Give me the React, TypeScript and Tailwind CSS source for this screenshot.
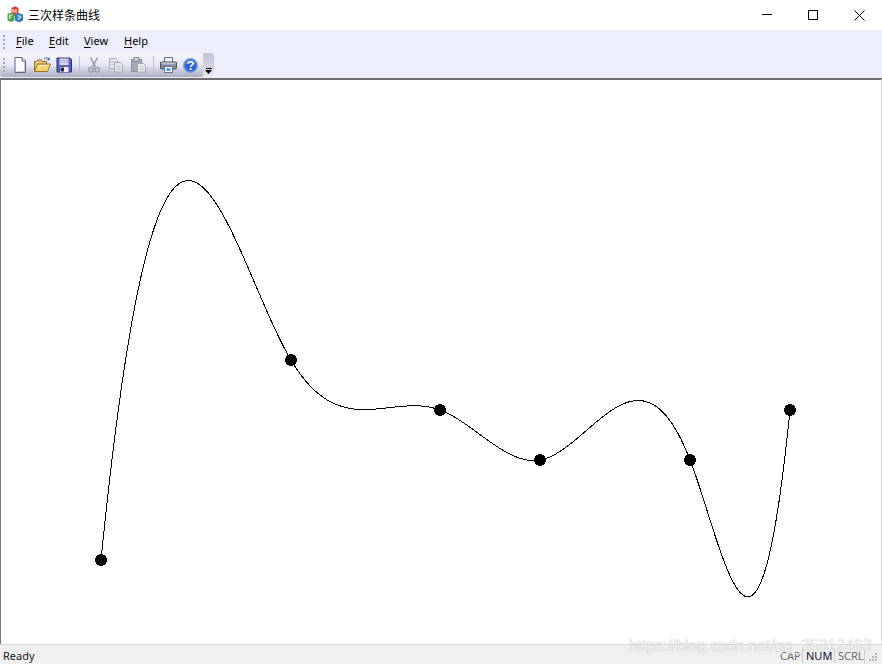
import React from "react";

const dots: [number, number][] = [[101, 560], [291, 360], [440, 410], [540, 460], [690, 460], [790, 410]];

function clampedSpline(p: [number, number][], m0: number, mn: number) {
  const n = p.length;
  const h = p.slice(0, -1).map((q, i) => p[i + 1][0] - q[0]);
  const a: number[] = new Array(n).fill(0);
  const b: number[] = new Array(n).fill(1);
  const c: number[] = new Array(n).fill(0);
  const r: number[] = new Array(n).fill(0);
  b[0] = 2 * h[0];
  c[0] = h[0];
  r[0] = 6 * ((p[1][1] - p[0][1]) / h[0] - m0);
  a[n - 1] = h[n - 2];
  b[n - 1] = 2 * h[n - 2];
  r[n - 1] = 6 * (mn - (p[n - 1][1] - p[n - 2][1]) / h[n - 2]);
  for (let i = 1; i < n - 1; i++) {
    a[i] = h[i - 1];
    b[i] = 2 * (h[i - 1] + h[i]);
    c[i] = h[i];
    r[i] = 6 * ((p[i + 1][1] - p[i][1]) / h[i] - (p[i][1] - p[i - 1][1]) / h[i - 1]);
  }
  for (let i = 1; i < n; i++) {
    const m = a[i] / b[i - 1];
    b[i] -= m * c[i - 1];
    r[i] -= m * r[i - 1];
  }
  const s: number[] = new Array(n).fill(0);
  s[n - 1] = r[n - 1] / b[n - 1];
  for (let i = n - 2; i >= 0; i--) s[i] = (r[i] - c[i] * s[i + 1]) / b[i];
  let d = "";
  for (let i = 0; i < n - 1; i++) {
    const step = 0.25;
    for (let x = p[i][0]; x <= p[i + 1][0]; x += step) {
      const A = (p[i + 1][0] - x) / h[i];
      const B = (x - p[i][0]) / h[i];
      const y = A * p[i][1] + B * p[i + 1][1] + (((A * A * A - A) * s[i] + (B * B * B - B) * s[i + 1]) * h[i] * h[i]) / 6;
      d += `${d ? "L" : "M"}${x} ${y.toFixed(2)} `;
    }
  }
  return d;
}

function Grip({ h }: { h: number }) {
  return (
    <svg width="3" height={h} viewBox={`0 0 3 ${h}`} className="block shrink-0">
      {[0, 4, 8, 12].filter((y) => y + 2 <= h).map((y) => (
        <rect key={y} x="0" y={y} width="2" height="2" fill="#a5a7b8" />
      ))}
    </svg>
  );
}

const Btn = ({ children }: { children: React.ReactNode }) => (
  <div className="w-[22px] h-[16px] flex items-center justify-center shrink-0">{children}</div>
);

const Sep = () => (
  <div className="w-[8px] h-[18px] flex justify-center shrink-0">
    <div className="w-px h-full bg-[#c2c3d2]" />
  </div>
);

const NewIcon = () => (
  <svg width="16" height="16" viewBox="0 0 16 16">
    <path d="M3 .5h7l3.5 3.5v11.5H3z" fill="#fff" stroke="#5a6488" />
    <path d="M10 .5V4h3.5" fill="#dfe3f0" stroke="#5a6488" />
    <path d="M12.500 5v9.500H5" fill="none" stroke="#c8cde0" />
  </svg>
);
const OpenIcon = () => (
  <svg width="17" height="16" viewBox="0 0 17 16">
    <path d="M.5 14.500v-10h2l1-1.500h4l1 1.500h4v3" fill="#e8c878" stroke="#8a6d28" />
    <path d="M.5 14.500l3-7.500h13l-3 7.500z" fill="#f7d376" stroke="#94732c" />
    <path d="M4 8.500h11" stroke="#fff0bd" />
    <path d="M10 2.500c1.500-2 3.500-2 5-.5" fill="none" stroke="#4c5f8e" />
    <path d="M15.800 .2v3h-3z" fill="#4c5f8e" />
  </svg>
);
const SaveIcon = () => (
  <svg width="16" height="16" viewBox="0 0 16 16">
    <path d="M1 1h13l1.500 1.500V15H1z" fill="#5a5fb8" stroke="#2f3278" />
    <rect x="3.500" y="1.500" width="9" height="6.500" fill="#d8dcf5" />
    <path d="M4 3.500h8M4 5.500h8" stroke="#a9aedf" />
    <rect x="4" y="10" width="8.500" height="5" fill="#f0f0f4" />
    <rect x="4.500" y="10.500" width="3.500" height="4" fill="#26264f" />
  </svg>
);
const CutIcon = () => (
  <svg width="12" height="16" viewBox="0 0 12 16" fill="none" stroke="#9a9dac">
    <path d="M2.500 .5L7.500 10M9.500 .5L4.500 10" strokeWidth="1.600" />
    <circle cx="3" cy="12.800" r="2.200" strokeWidth="1.500" />
    <circle cx="9" cy="12.800" r="2.200" strokeWidth="1.500" />
  </svg>
);
const CopyIcon = () => (
  <svg width="16" height="16" viewBox="0 0 16 16">
    <path d="M1.500 1.500h6l2 2v8h-8z" fill="#e6e8ef" stroke="#a6a9b8" />
    <path d="M6.500 5.500h6l2 2v7.500h-8z" fill="#e6e8ef" stroke="#a6a9b8" />
    <path d="M3 5h4M3 7.500h2M8 9.500h5M8 12h5" stroke="#b4b7c5" />
  </svg>
);
const PasteIcon = () => (
  <svg width="17" height="16" viewBox="0 0 17 16">
    <rect x="1.500" y="2.500" width="10" height="12" fill="#a3a6b3" stroke="#8d909e" />
    <rect x="4" y=".5" width="5" height="4" fill="#c8cad5" stroke="#8d909e" />
    <path d="M7.500 6.500h6l2 2v6.500h-8z" fill="#e8eaf0" stroke="#a5a8b6" />
    <path d="M9 10h5M9 12.500h5" stroke="#bcbfcc" />
  </svg>
);
const PrintIcon = () => (
  <svg width="17" height="16" viewBox="0 0 17 16">
    <rect x="4.500" y=".5" width="8" height="5" fill="#eef0f6" stroke="#69708a" />
    <rect x=".5" y="5" width="16" height="7" rx="1" fill="#83869a" stroke="#4e5163" />
    <rect x="1.500" y="5.500" width="14" height="2" fill="#c0c2ce" />
    <rect x="4.500" y="9.500" width="8" height="6" fill="#fff" stroke="#69708a" />
    <rect x="6.500" y="11" width="4" height="3" fill="#4aa0e0" />
  </svg>
);
const HelpIcon = () => (
  <svg width="15" height="15" viewBox="0 0 15 15">
    <circle cx="7.500" cy="7.500" r="7" fill="#4f80dc" stroke="#7f9fdd" />
    <circle cx="7.500" cy="7.500" r="5.300" fill="#2c62cf" />
    <path d="M3.500 6a4.300 4.300 0 0 1 8 0" fill="none" stroke="#a9c6f5" />
    <path d="M5.300 5.800c0-2.600 4.500-2.600 4.500 0 0 1.700-2.200 1.500-2.200 3.200" fill="none" stroke="#fff" strokeWidth="1.500" />
    <rect x="6.700" y="10" width="1.800" height="1.800" fill="#fff" />
  </svg>
);
const Logo = () => (
  <svg width="17" height="17" viewBox="0 0 17 17">
    <path d="M4.500 2L8 .3 11.500 2v6.500L8 10 4.500 8.500z" fill="#d8452c" />
    <path d="M6 3v4M9 3v4M6 5h3" stroke="#fbe4d8" />
    <path d="M.5 8L4 6.500 7.500 8v6.500L4 16 .5 14.500z" fill="#57a04c" />
    <path d="M2.500 9v4M2.500 9h3M2.500 11h2" stroke="#e4f4dc" />
    <path d="M8 8.500L12 7l4 1.500v6L12 16.500 8 14.500z" fill="#2f7fc0" />
    <path d="M10.500 10h3v2h-2v2" fill="none" stroke="#dceffc" />
  </svg>
);

const sans = "font-['Noto_Sans','Liberation_Sans',sans-serif]";

export default function App() {
  return (
    <div className={`w-[882px] h-[664px] bg-white flex flex-col relative overflow-hidden ${sans}`}>
      <header className="h-[30px] flex items-center bg-white shrink-0">
        <div className="ml-[7px] mt-[-1px]"><Logo /></div>
        <span className="ml-[4px] text-[12px] leading-[30px] text-black font-['Noto_Sans_CJK_SC',sans-serif]">三次样条曲线</span>
        <div className="ml-auto flex items-center">
          <div className="w-[46px] h-[30px] flex items-center justify-center">
            <svg width="10" height="10" viewBox="0 0 10 10"><path d="M0 4.500h10" stroke="#000" /></svg>
          </div>
          <div className="w-[46px] h-[30px] flex items-center justify-center">
            <svg width="10" height="10" viewBox="0 0 10 10"><rect x=".5" y=".5" width="9" height="9" fill="none" stroke="#000" /></svg>
          </div>
          <div className="w-[46px] h-[30px] flex items-center justify-center">
            <svg width="11" height="11" viewBox="0 0 11 11"><path d="M.5 .5l10 10M10.500 .5l-10 10" stroke="#000" /></svg>
          </div>
        </div>
      </header>

      <nav className="h-[23px] bg-[#eceefb] flex items-center shrink-0 text-[11px] text-black">
        <div className="ml-[3px] mr-[10px]"><Grip h={14} /></div>
        <span className="w-[33px]"><span className="underline underline-offset-2">F</span>ile</span>
        <span className="w-[35px]"><span className="underline underline-offset-2">E</span>dit</span>
        <span className="w-[40px]"><span className="underline underline-offset-2">V</span>iew</span>
        <span><span className="underline underline-offset-2">H</span>elp</span>
      </nav>

      <div className="h-[25px] bg-[#eceefb] flex shrink-0">
        <div className="w-[204px] h-[24px] rounded-r-[4px] rounded-bl-[3px] flex items-center pl-[3px] bg-gradient-to-b from-[#f6f7fd] via-[#e6e7f3] to-[#acaec4]">
          <div className="w-[6px]"><Grip h={14} /></div>
          <Btn><NewIcon /></Btn>
          <Btn><OpenIcon /></Btn>
          <Btn><SaveIcon /></Btn>
          <Sep />
          <Btn><CutIcon /></Btn>
          <Btn><CopyIcon /></Btn>
          <Btn><PasteIcon /></Btn>
          <Sep />
          <Btn><PrintIcon /></Btn>
          <Btn><HelpIcon /></Btn>
        </div>
        <div className="w-[11px] h-[24px] ml-[-1px] rounded-r-[4px] bg-gradient-to-b from-[#bfc1d5] to-[#e6e7f3] flex flex-col items-center justify-end pb-[3px] gap-[1px]">
          <div className="w-[6px] h-px bg-black" />
          <svg width="7" height="4" viewBox="0 0 7 4"><path d="M0 0h7L3.500 4z" fill="#000" /></svg>
        </div>
      </div>

      <main className="flex-1 min-h-0 border-t-2 border-t-[#6e6e6e] border-l border-l-[#7a7a7a] border-r border-r-[#d8d8d8] bg-white">
        <svg width="880" height="564" viewBox="1 80 880 564" className="block">
          <path d={clampedSpline(dots, -10, -10)} fill="none" stroke="#000" strokeWidth="1" shapeRendering="crispEdges" />
          <g shapeRendering="crispEdges">
            {dots.map(([x, y]) => (
              <circle key={x} cx={x} cy={y} r="6" fill="#000" />
            ))}
          </g>
        </svg>
      </main>

      <footer className="h-[20px] bg-[#f0f0f0] border-t border-t-[#d9d9d9] flex items-center shrink-0 text-[11px] text-[#1a1a1a] pl-[3px]">
        <span className="mt-[3px]">Ready</span>
        <div className="ml-auto flex items-center h-full mr-[2px]">
          <span className="w-[23px] mt-[3px] text-[#6d6d6d] border-r border-r-[#cfcfcf] leading-[14px]">CAP</span>
          <span className="w-[32px] mt-[3px] pl-[3px] text-[#111133] border-r border-r-[#cfcfcf] leading-[14px]">NUM</span>
          <span className="w-[30px] mt-[3px] pl-[3px] text-[#6d6d6d] border-r border-r-[#cfcfcf] leading-[14px]">SCRL</span>
          <svg width="14" height="14" viewBox="0 0 14 14" className="ml-[1px] mt-[3px]">
            <path d="M9 4h2v2H9zM6 7h2v2H6zM9 7h2v2H9zM3 10h2v2H3zM6 10h2v2H6zM9 10h2v2H9z" fill="#b5b5b5" />
          </svg>
        </div>
      </footer>

      <div className="absolute left-[629px] top-[636px] text-[15.800px] leading-[20px] whitespace-nowrap text-[rgba(255,255,255,0.75)] font-['Liberation_Sans',sans-serif] [text-shadow:0_0_1px_rgba(110,110,110,0.5)]">
        https://blog.csdn.net/qq_35312463
      </div>
    </div>
  );
}
